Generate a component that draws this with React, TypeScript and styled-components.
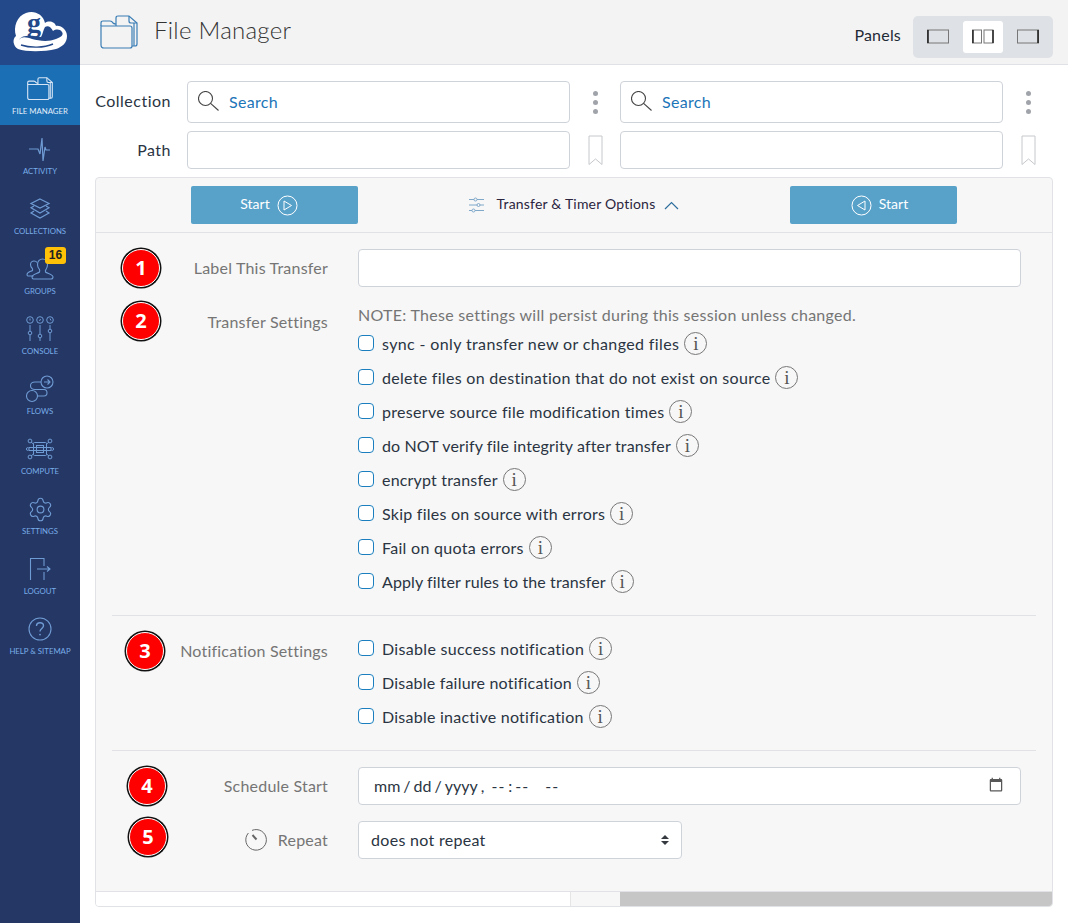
import React from "react";
import styled, { createGlobalStyle } from "styled-components";
import { Settings } from "lucide-react";

const Global = createGlobalStyle`
  html, body { margin: 0; padding: 0; height: 100%; background: #fff; }
  body { font-family: Lato, "Open Sans", sans-serif; font-size: 16px; color: #1f2a37; overflow: hidden; }
  * { box-sizing: border-box; }
`;

const Shell = styled.div`display: flex; height: 923px; width: 1068px; overflow: hidden;`;
const Sidebar = styled.nav`width: 80px; flex: none; background: #253764; display: flex; flex-direction: column;`;
const LogoBox = styled.div`height: 65px; padding-bottom: 6px; background: #23498a; display: flex; align-items: center; justify-content: center;`;
const NavItem = styled.div<{ $active?: boolean }>`
  position: relative; height: 60px; display: flex; flex-direction: column; align-items: center; padding-top: 8px;
  background: ${p => (p.$active ? "#1b6fb5" : "transparent")};
  color: ${p => (p.$active ? "#e3eefa" : "#79aeea")};
  svg { display: block; }
`;
const IconSlot = styled.div`height: 32px; display: flex; align-items: center; justify-content: center;`;
const NavLabel = styled.span`font-size: 7.8px; line-height: 12px; white-space: nowrap; text-transform: uppercase;`;
const CountBadge = styled.span`
  position: absolute; left: 45px; top: 2px; width: 21px; height: 17px; background: #ffc107; border-radius: 3px;
  font: 700 12px/17px "Liberation Sans", sans-serif; color: #222; text-align: center;
`;

const Main = styled.main`flex: 1; min-width: 0; display: flex; flex-direction: column;`;
const Header = styled.header`
  height: 65px; flex: none; background: #f3f3f3; border-bottom: 1px solid #dfe1e6;
  display: flex; align-items: center; padding: 0 15px 0 20px;
`;
const Title = styled.h1`font-weight: 300; font-size: 24px; letter-spacing: .27px; color: #333; margin: 0 0 6px 16px; flex: 1;`;
const PanelsLabel = styled.span`font-size: 16px; letter-spacing: .2px; color: #1f2a37; margin: 4px 12px 0 0;`;
const PanelsGroup = styled.div`width: 140px; height: 42px; margin-top: 9px; background: #dee1e5; border-radius: 5px; display: flex; align-items: center; gap: 5px; padding: 0 5px;`;
const PanelBtn = styled.div<{ $active?: boolean }>`
  width: 40px; height: 32px; border-radius: 3px;
  background: ${p => (p.$active ? "#fff" : "transparent")};
  display: flex; align-items: center; justify-content: center; flex: none;
`;

const Content = styled.div`padding: 16px 15px 16px; display: flex; flex-direction: column;`;
const PathRow = styled.div<{ $h: number; $mb: number }>`
  display: grid; grid-template-columns: 76px 399px 50px 383px 50px; height: ${p => p.$h}px; margin-bottom: ${p => p.$mb}px; align-items: center;
`;
const RowLabel = styled.label<{ $lift: number }>`text-align: right; font-size: 16px; letter-spacing: .5px; color: #2a3442; padding-bottom: ${p => p.$lift}px; white-space: nowrap;`;
const FieldWrap = styled.div`height: 100%; padding-left: 16px;`;
const FieldInner = styled.div`height: 100%; border: 1px solid #ced2d9; border-radius: 4px; background: #fff; display: flex; align-items: center; gap: 10px; padding: 0 0 2px 10px; color: #1b75b8; letter-spacing: .3px;`;
const Cell = styled.div`height: 100%; display: flex; align-items: center; justify-content: center;`;
const Kebab = styled.div`
  display: flex; flex-direction: column; gap: 4px;
  span { width: 5px; height: 5px; border-radius: 50%; background: #a0a4aa; display: block; }
`;

const PanelCard = styled.section`
  position: relative; height: 730px; border: 1px solid #e0e2e6; border-radius: 4px; background: #f7f7f7; display: flex; flex-direction: column; overflow: hidden;
`;
const Toolbar = styled.div`
  height: 55px; flex: none; border-bottom: 1px solid #e0e2e6; display: grid; grid-template-columns: 167px 1fr 167px; padding: 8px 95px 0;
`;
const StartBtn = styled.button<{ $flip?: boolean }>`
  height: 38px; border: 0; border-radius: 2px; background: #58a2ca; color: #fff; font: 400 14px Lato, sans-serif; display: flex; align-items: center; justify-content: center; gap: 7px;
  padding: ${p => (p.$flip ? "0 0 0 12px" : "0 11px 0 0")};
`;
const StartText = styled.span`padding-bottom: 3px;`;
const Options = styled.div`display: flex; align-items: center; justify-content: center; height: 38px; font-size: 14px; letter-spacing: .2px; color: #2b2540;`;
const OptionsText = styled.span`margin: 0 9px 0 13px; padding-bottom: 3px;`;

const Body = styled.div`flex: 1; padding: 0 16px; position: relative;`;
const Section = styled.div<{ $pt: number; $h: number; $line?: boolean }>`
  position: relative; padding-top: ${p => p.$pt}px; height: ${p => p.$h}px;
  border-bottom: ${p => (p.$line ? "1px solid #e0e2e6" : "none")};
`;
const FormRow = styled.div<{ $mb?: number; $start?: boolean }>`
  position: relative; display: grid; grid-template-columns: 216px 1fr; column-gap: 30px; padding-right: 15px;
  align-items: ${p => (p.$start ? "start" : "center")}; margin-bottom: ${p => p.$mb ?? 0}px;
`;
const FieldLabel = styled.div<{ $nudge?: number; $lift?: number }>`
  text-align: right; font-size: 16px; letter-spacing: .2px; color: #757575; display: flex; justify-content: flex-end; align-items: center; gap: 10px;
  padding-top: ${p => p.$nudge ?? 0}px; padding-bottom: ${p => p.$lift ?? 0}px;
`;
const TextField = styled.input`
  height: 38px; width: 100%; border: 1px solid #ced2d9; border-radius: 4px; background: #fff; outline: none; display: block;
  font: 16px Lato, sans-serif; color: #333; padding: 0 15px;
`;
const SelectWrap = styled.div`position: relative; width: 324px; height: 38px;`;
const SelectField = styled.select`
  appearance: none; width: 100%; height: 38px; border: 1px solid #ced2d9; border-radius: 4px; background: #fff; font: 16px Lato, sans-serif; letter-spacing: .3px; color: #2a3442; padding: 0 12px 2px; outline: none;
`;
const SelectArrow = styled.svg`position: absolute; right: 13px; top: 14px; pointer-events: none;`;
const Note = styled.div`font-size: 16px; letter-spacing: .28px; color: #757575; line-height: 24px; margin: 4px 0 -1px; white-space: nowrap;`;
const CheckRow = styled.label<{ $ls: number }>`height: 34px; display: flex; align-items: center; font-size: 16px; letter-spacing: ${p => p.$ls}px; color: #2a3442; white-space: nowrap;`;
const Check = styled.input`
  appearance: none; width: 16px; height: 16px; margin: 0 8px 0 0; border: 1px solid #1b7fbf; border-radius: 4px; background: #fff; flex: none;
`;
const Info = styled.span`
  width: 23px; height: 23px; border: 1px solid #777; border-radius: 50%; margin: 1px 0 0 5px; display: flex; align-items: center; justify-content: center; font: 400 19px "Liberation Serif", serif; letter-spacing: 0; color: #555; flex: none;
`;
const Marker = styled.div<{ $left: number; $top: number }>`
  position: absolute; left: ${p => p.$left}px; top: ${p => p.$top}px; width: 38px; height: 38px; border-radius: 50%; background: #f00; border: 1px solid #fff; box-shadow: 0 0 0 1.5px #111;
  color: #fff; font: 700 20px/36px "Open Sans", sans-serif; text-align: center;
`;
const DateInput = styled.input`
  height: 38px; width: 100%; border: 1px solid #ced2d9; border-radius: 4px; background: #fff; font: 16px Lato, sans-serif; letter-spacing: 0; padding: 0 15px 2px 14px; color: #2b3542; outline: none;
  &::-webkit-datetime-edit-text { padding: 0 2px; }
  &::-webkit-datetime-edit-hour-field,
  &::-webkit-datetime-edit-minute-field,
  &::-webkit-datetime-edit-ampm-field { letter-spacing: 1px; }
  &::-webkit-datetime-edit-ampm-field { margin-left: 6px; }
  &::-webkit-calendar-picker-indicator { opacity: .65; margin-right: -1px; }
`;
const ScrollTrack = styled.div`height: 15px; flex: none; border-top: 1px solid #e0e2e6; background: #fff; display: flex;`;
const TrackEdge = styled.div`width: 475px; flex: none; border-right: 1px solid #e5e5e5;`;
const TrackMid = styled.div`width: 49px; flex: none; background: #f7f7f7;`;
const TrackThumb = styled.div`flex: 1; background: #c6c6c6;`;

const stroke = "#6f9bd4";
type P = { c?: string };
const FileIcon = ({ c = "#d7e5f5", w = 26 }: P & { w?: number }) => (
  <svg width={w} height={w * 34 / 38} viewBox="0 0 38 34" fill="none" stroke={c} strokeWidth={w > 30 ? 1.2 : 1.6}>
    <path d="M1 11V8Q1 6 3 6H10Q12 6 13 8Q14 9 16 9" />
    <path d="M1 11H30Q32 11 32 13V31Q32 33 30 33H4Q1 33 1 30Z" />
    <path d="M16 11V3Q16 1 18 1H29L37 8V29Q37 31 35 31H32" />
    <path d="M29 1V6Q29 8 31 8H37" />
    <path d="M34 8V31" />
  </svg>
);
const SearchGlyph = () => (
  <svg width="21" height="20" viewBox="0 0 21 20" fill="none" stroke="#444" strokeWidth="1.1">
    <circle cx="7.5" cy="7.5" r="7" /><path d="M12.6 12.4L20.5 19.5" />
  </svg>
);
const ActivityIcon = () => (
  <svg width="22" height="28" viewBox="0 0 22 28" fill="none" stroke={stroke} strokeWidth="1.2">
    <path d="M0 14H9L11 19L13 3L14 26L16 12L17 15L21 15" />
  </svg>
);
const LayersIcon = () => (
  <svg width="22" height="24" viewBox="0 0 22 24" fill="none" stroke={stroke} strokeWidth="1.2">
    <path d="M11 2L20 6.5L11 11L2 6.5Z" />
    <path d="M5 9L2 10.8L11 16L20 10.8L17 9" />
    <path d="M5 14L2 16L11 21L20 16L17 14" />
  </svg>
);
const GroupsIcon = () => (
  <svg width="28" height="22" viewBox="0 0 28 22" fill="none" stroke={stroke} strokeWidth="1.1">
    <path d="M7.5 18H2Q1 18 1 16.5C1 14 5 13.5 6.5 12.5Q7 11 6 10Q4.5 8.5 4.5 6.5C4.5 4 6.5 3 8 3C9.5 3 10.5 3.6 11 4.5" />
    <path d="M7.5 21H25Q27 21 27 19C27 16.5 21 15.5 19.5 14Q19 12.5 20 11.5Q21.5 9.5 21.5 6.5C21.5 3 19 1 16.5 1C14 1 11.5 3 11.5 6.5C11.5 9.5 13 10.5 13.5 11.5Q14 12.5 13.5 14C12 15.5 6 16.5 6 19Q6 21 7.5 21Z" />
  </svg>
);
const ConsoleIcon = () => (
  <svg width="28" height="26" viewBox="0 0 28 26" fill="none" stroke={stroke} strokeWidth="1">
    <circle cx="4" cy="4" r="3.3" /><circle cx="14" cy="4" r="3.3" /><circle cx="24" cy="4" r="3.3" />
    <path d="M4 2.5V4.5M13.5 5L14.5 3M24 2.5L25 4.5" />
    <path d="M4 9V15M4 19V25M14 9V18M14 22V25M24 9V13M24 17V25" />
    <circle cx="4" cy="17" r="1.8" /><circle cx="14" cy="20" r="1.8" /><circle cx="24" cy="15" r="1.8" />
  </svg>
);
const FlowsIcon = () => (
  <svg width="28" height="28" viewBox="0 0 28 28" fill="none" stroke={stroke} strokeWidth="1.1">
    <circle cx="21" cy="7" r="6" />
    <path d="M18 7H24M21.5 4.5L24 7L21.5 9.5" />
    <circle cx="6" cy="21" r="5.5" />
    <path d="M15 7H9C3 7 3 14.5 9 14.5H18C22 14.5 22 21 18 21H11.5" />
  </svg>
);
const ComputeIcon = () => (
  <svg width="28" height="22" viewBox="0 0 28 22" fill="none" stroke={stroke} strokeWidth="1">
    <rect x="7.5" y="4.5" width="13" height="13" rx="1" /><rect x="10.5" y="7.5" width="7" height="7" />
    <path d="M3 9.5H25M3 12.5H25M5 4L8 6.5M23 4L20 6.5M5 18L8 15.5M23 18L20 15.5" />
    <circle cx="4" cy="3" r="1.9" /><circle cx="24" cy="3" r="1.9" /><circle cx="4" cy="19" r="1.9" /><circle cx="24" cy="19" r="1.9" /><circle cx="1.8" cy="11" r="1.4" /><circle cx="26.2" cy="11" r="1.4" />
  </svg>
);
const LogoutIcon = () => (
  <svg width="22" height="24" viewBox="0 0 22 24" fill="none" stroke={stroke} strokeWidth="1.1">
    <path d="M1.5 23V1.5H15V9M15 15V23" /><path d="M8 12H20.5M18 9.5L21 12L18 14.5" />
  </svg>
);
const HelpIcon = () => (
  <svg width="24" height="24" viewBox="0 0 24 24" fill="none" stroke={stroke} strokeWidth="1.1">
    <circle cx="12" cy="12" r="11" />
    <path d="M8.5 9C8.5 6.8 10 5.8 12 5.8C14.2 5.8 15.5 7 15.5 8.8C15.5 11.4 12 11.6 12 14.5" strokeWidth="1.4" />
    <circle cx="12" cy="17.6" r=".9" fill={stroke} stroke="none" />
  </svg>
);
const Logo = () => (
  <svg width="56" height="47" viewBox="4 0 56 47">
    <path fill="#fff" d="M10 43C5 40 4 33 8 30C5 21 9 10 18 7C26 4 35 8 37 17C41 14 47 16 48 20C53 19 59 24 59 30C59 37 54 41 48 43C36 46 18 46 10 43Z" />
    <path fill="#23498a" d="M11 34C13 30 19 31 24 33C31 35 41 36 48 33C53 31 56 29 54 26C52 23 48 23 45 25C43 21 40 19 37 21C35 24 35 28 33 31C26 30 14 28 11 34Z" />
    <path fill="none" stroke="#23498a" strokeWidth="1.4" d="M13 39C22 42 36 42 45 38" />
    <text x="19" y="26" fill="#23498a" fontFamily="Liberation Serif, serif" fontWeight="700" fontSize="28">g</text>
  </svg>
);
const PanelGlyph = ({ kind }: { kind: "l" | "m" | "r" }) => (
  <svg width="22" height="15" viewBox="0 0 22 15" fill="none">
    {kind === "m" ? (
      <>
        <rect x=".5" y="1" width="9" height="13" stroke="#777" />
        <path d="M1 1V14" stroke="#222" strokeWidth="1.5" />
        <rect x="12" y="1" width="9" height="13" stroke="#777" />
        <path d="M21 1V14" stroke="#222" strokeWidth="1.5" />
      </>
    ) : (
      <>
        <rect x=".5" y="1" width="21" height="13" stroke="#777" />
        <path d={kind === "l" ? "M1 1V14" : "M21 1V14"} stroke="#222" strokeWidth="1.6" />
      </>
    )}
  </svg>
);
const Bookmark = () => (
  <svg width="15" height="31" viewBox="0 0 15 31" fill="none" stroke="#c6c8cc" strokeWidth="1">
    <path d="M1 1H14V29.5L7.5 24L1 29.5Z" />
  </svg>
);
const CirclePlay = ({ flip }: { flip?: boolean }) => (
  <svg width="21" height="21" viewBox="0 0 21 21" fill="none" stroke="#fff" strokeWidth="1">
    <circle cx="10.5" cy="10.5" r="9.5" />
    <path d={flip ? "M14 6V15L6.5 10.5Z" : "M7 6V15L14.5 10.5Z"} />
  </svg>
);
const SliderIcon = () => (
  <svg width="15" height="16" viewBox="0 0 15 16" fill="none" stroke="#7fa8c9" strokeWidth="1">
    <path d="M0 2.5H5M8 2.5H15M0 8H8M11 8H15M0 13.5H3M6 13.5H15" />
    <circle cx="6.5" cy="2.5" r="1.5" /><circle cx="9.5" cy="8" r="1.5" /><circle cx="4.5" cy="13.5" r="1.5" />
  </svg>
);
const Chevron = () => (
  <svg width="15" height="9" viewBox="0 0 15 9" fill="none" stroke="#2f6f9e" strokeWidth="1.2"><path d="M1 8L7.5 1.5L14 8" /></svg>
);
const Dial = () => (
  <svg width="23" height="23" viewBox="0 0 23 23" fill="none" stroke="#666" strokeWidth="1">
    <path d="M7 2.4A10.3 10.3 0 1 1 3.4 5" /><path d="M7.5 7L11.5 11.5" strokeWidth="2" />
  </svg>
);

const nav: [string, React.ReactNode][] = [
  ["Activity", <ActivityIcon />],
  ["Collections", <LayersIcon />],
  ["Groups", <GroupsIcon />],
  ["Console", <ConsoleIcon />],
  ["Flows", <FlowsIcon />],
  ["Compute", <ComputeIcon />],
  ["Settings", <Settings size={27} strokeWidth={1} color={stroke} />],
  ["Logout", <LogoutIcon />],
  ["Help & Sitemap", <HelpIcon />],
];
const transfer: [string, number][] = [
  ["sync - only transfer new or changed files", 0.37],
  ["delete files on destination that do not exist on source", 0.29],
  ["preserve source file modification times", 0.3],
  ["do NOT verify file integrity after transfer", 0.13],
  ["encrypt transfer", 0.19],
  ["Skip files on source with errors", 0.25],
  ["Fail on quota errors", 0.3],
  ["Apply filter rules to the transfer", 0.1],
];
const notify: [string, number][] = [
  ["Disable success notification", 0.32],
  ["Disable failure notification", 0.21],
  ["Disable inactive notification", 0.25],
];

const Option = ({ text, ls }: { text: string; ls: number }) => (
  <CheckRow $ls={ls}><Check type="checkbox" />{text}<Info>i</Info></CheckRow>
);
const Dots = () => <Kebab><span /><span /><span /></Kebab>;

export default function App() {
  return (
    <Shell>
      <Global />
      <Sidebar>
        <LogoBox><Logo /></LogoBox>
        <NavItem $active>
          <IconSlot><FileIcon /></IconSlot>
          <NavLabel>File Manager</NavLabel>
        </NavItem>
        {nav.map(([label, icon]) => (
          <NavItem key={label}>
            <IconSlot>{icon}</IconSlot>
            <NavLabel>{label}</NavLabel>
            {label === "Groups" && <CountBadge>16</CountBadge>}
          </NavItem>
        ))}
      </Sidebar>
      <Main>
        <Header>
          <FileIcon c="#3a7db5" w={38} />
          <Title>File Manager</Title>
          <PanelsLabel>Panels</PanelsLabel>
          <PanelsGroup>
            <PanelBtn><PanelGlyph kind="l" /></PanelBtn>
            <PanelBtn $active><PanelGlyph kind="m" /></PanelBtn>
            <PanelBtn><PanelGlyph kind="r" /></PanelBtn>
          </PanelsGroup>
        </Header>
        <Content>
          <PathRow $h={42} $mb={8}>
            <RowLabel $lift={4}>Collection</RowLabel>
            <FieldWrap><FieldInner><SearchGlyph />Search</FieldInner></FieldWrap>
            <Cell><Dots /></Cell>
            <FieldInner><SearchGlyph />Search</FieldInner>
            <Cell><Dots /></Cell>
          </PathRow>
          <PathRow $h={38} $mb={8}>
            <RowLabel $lift={2}>Path</RowLabel>
            <FieldWrap><FieldInner /></FieldWrap>
            <Cell><Bookmark /></Cell>
            <FieldInner />
            <Cell><Bookmark /></Cell>
          </PathRow>
          <PanelCard>
            <Toolbar>
              <StartBtn><StartText>Start</StartText><CirclePlay /></StartBtn>
              <Options><SliderIcon /><OptionsText>Transfer &amp; Timer Options</OptionsText><Chevron /></Options>
              <StartBtn $flip><CirclePlay flip /><StartText>Start</StartText></StartBtn>
            </Toolbar>
            <Body>
              <Section $pt={16} $h={383} $line>
                <FormRow $mb={12}>
                  <Marker $left={10} $top={0}>1</Marker>
                  <FieldLabel $lift={2}>Label This Transfer</FieldLabel>
                  <TextField />
                </FormRow>
                <FormRow $start>
                  <Marker $left={10} $top={3}>2</Marker>
                  <FieldLabel $nudge={13}>Transfer Settings</FieldLabel>
                  <div>
                    <Note>NOTE: These settings will persist during this session unless changed.</Note>
                    {transfer.map(([t, ls]) => <Option key={t} text={t} ls={ls} />)}
                  </div>
                </FormRow>
              </Section>
              <Section $pt={15} $h={135} $line>
                <FormRow $start>
                  <Marker $left={14} $top={1}>3</Marker>
                  <FieldLabel $nudge={10}>Notification Settings</FieldLabel>
                  <div>{notify.map(([t, ls]) => <Option key={t} text={t} ls={ls} />)}</div>
                </FormRow>
              </Section>
              <Section $pt={16} $h={140}>
                <FormRow $mb={16}>
                  <Marker $left={16} $top={0}>4</Marker>
                  <FieldLabel $lift={2}>Schedule Start</FieldLabel>
                  <DateInput type="datetime-local" />
                </FormRow>
                <FormRow>
                  <Marker $left={17} $top={-3}>5</Marker>
                  <FieldLabel $lift={2}><Dial />Repeat</FieldLabel>
                  <SelectWrap>
                    <SelectField defaultValue="none"><option value="none">does not repeat</option></SelectField>
                    <SelectArrow width="8" height="10" viewBox="0 0 8 10"><path fill="#343a40" d="M4 0L8 4H0ZM4 10L0 6H8Z" /></SelectArrow>
                  </SelectWrap>
                </FormRow>
              </Section>
            </Body>
            <ScrollTrack><TrackEdge /><TrackMid /><TrackThumb /></ScrollTrack>
          </PanelCard>
        </Content>
      </Main>
    </Shell>
  );
}
